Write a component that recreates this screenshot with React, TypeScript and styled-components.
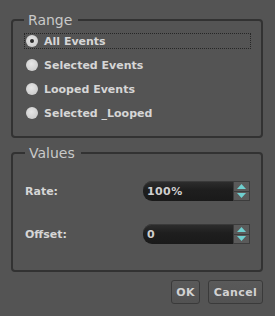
import React from "react";
import styled, { createGlobalStyle } from "styled-components";

const GlobalStyle = createGlobalStyle`
  html, body {
    margin: 0;
    padding: 0;
    background: #545454;
  }
  body {
    font-family: "DejaVu Sans", "Liberation Sans", sans-serif;
  }
`;

const StyledDialog = styled.div`
  width: 275px;
  height: 316px;
  box-sizing: border-box;
  padding: 12px 12px 0 11px;
  display: flex;
  flex-direction: column;
  gap: 7px;
`;

const StyledGroup = styled.fieldset<{ $pad: string }>`
  margin: 0;
  padding: ${(p) => p.$pad};
  border: 2px solid #323232;
  border-radius: 4px;
  min-width: 0;
`;

const StyledLegend = styled.legend`
  padding: 0 6px 0 4px;
  font-size: 14px;
  line-height: 16px;
  color: #c9c9c9;
`;

const StyledRadioRow = styled.div`
  height: 24px;
  display: flex;
  align-items: center;
`;

const StyledRadioLabel = styled.label<{ $focused?: boolean }>`
  flex: 1;
  height: 16px;
  box-sizing: border-box;
  display: flex;
  align-items: center;
  gap: 6px;
  padding-left: 1px;
  border: 1px dotted ${(p) => (p.$focused ? "#262626" : "transparent")};
  font-size: 11px;
  font-weight: bold;
  color: #d6d6d6;
`;

const StyledRadioDot = styled.span<{ $checked?: boolean }>`
  width: 12px;
  height: 12px;
  border-radius: 50%;
  background: radial-gradient(circle at 45% 40%, #e6e6e6, #c4c4c4);
  display: flex;
  align-items: center;
  justify-content: center;

  &::after {
    content: "";
    width: 4px;
    height: 4px;
    border-radius: 50%;
    background: ${(p) => (p.$checked ? "#2c2c2c" : "transparent")};
  }
`;

const StyledValueGrid = styled.div`
  display: grid;
  grid-template-columns: 1fr 107px;
  row-gap: 23px;
  align-items: center;
`;

const StyledFieldLabel = styled.span`
  font-size: 11px;
  font-weight: bold;
  color: #d6d6d6;
`;

const StyledSpin = styled.div`
  display: flex;
  height: 20px;
`;

const StyledSpinField = styled.div`
  flex: 1;
  border-radius: 9px 0 0 9px;
  background: linear-gradient(#2e2e2e, #1e1e1e 45%, #1a1a1a);
  box-shadow: inset 0 1px 0 #3a3a3a;
  display: flex;
  align-items: center;
  padding-left: 4px;
  font-size: 11px;
  font-weight: bold;
  letter-spacing: 0.4px;
  color: #cfcfcf;
`;

const StyledSpinButtons = styled.div`
  width: 17px;
  display: flex;
  flex-direction: column;
`;

const StyledSpinButton = styled.div`
  flex: 1;
  box-sizing: border-box;
  border: 1px solid #3c3c3c;
  background: #5a5a5a;
  display: flex;
  align-items: center;
  justify-content: center;

  & + & {
    border-top: none;
  }
`;

const StyledFooter = styled.div`
  display: flex;
  justify-content: flex-end;
  gap: 8px;
  margin-top: 1px;
`;

const StyledButton = styled.button<{ $width: number }>`
  width: ${(p) => p.$width}px;
  height: 24px;
  padding: 0;
  border: 1px solid #3a3a3a;
  border-radius: 3px;
  background: linear-gradient(#5a5a5a, #525252);
  font-family: "DejaVu Sans", sans-serif;
  font-size: 11px;
  font-weight: bold;
  letter-spacing: 0.4px;
  color: #d2d2d2;
`;

const Arrow: React.FC<{ up?: boolean }> = ({ up }) => (
  <svg width="9" height="5" viewBox="0 0 9 5">
    <path d={up ? "M4.5 0L9 5H0Z" : "M0 0H9L4.5 5Z"} fill="#6fcfcf" />
  </svg>
);

const ranges = ["All Events", "Selected Events", "Looped Events", "Selected _Looped"];

const SpinBox: React.FC<{ value: string }> = ({ value }) => (
  <StyledSpin>
    <StyledSpinField>{value}</StyledSpinField>
    <StyledSpinButtons>
      <StyledSpinButton>
        <Arrow up />
      </StyledSpinButton>
      <StyledSpinButton>
        <Arrow />
      </StyledSpinButton>
    </StyledSpinButtons>
  </StyledSpin>
);

const App: React.FC = () => {
  return (
    <>
      <GlobalStyle />
      <StyledDialog>
        <StyledGroup $pad="1px 10px 11px 11px">
          <StyledLegend>Range</StyledLegend>
          {ranges.map((name, i) => (
            <StyledRadioRow key={name}>
              <StyledRadioLabel $focused={i === 0}>
                <StyledRadioDot $checked={i === 0} />
                {name}
              </StyledRadioLabel>
            </StyledRadioRow>
          ))}
        </StyledGroup>

        <StyledGroup $pad="20px 11px 26px 12px">
          <StyledLegend>Values</StyledLegend>
          <StyledValueGrid>
            <StyledFieldLabel>Rate:</StyledFieldLabel>
            <SpinBox value="100%" />
            <StyledFieldLabel>Offset:</StyledFieldLabel>
            <SpinBox value="0" />
          </StyledValueGrid>
        </StyledGroup>

        <StyledFooter>
          <StyledButton $width={29}>OK</StyledButton>
          <StyledButton $width={55}>Cancel</StyledButton>
        </StyledFooter>
      </StyledDialog>
    </>
  );
};

export default App;
